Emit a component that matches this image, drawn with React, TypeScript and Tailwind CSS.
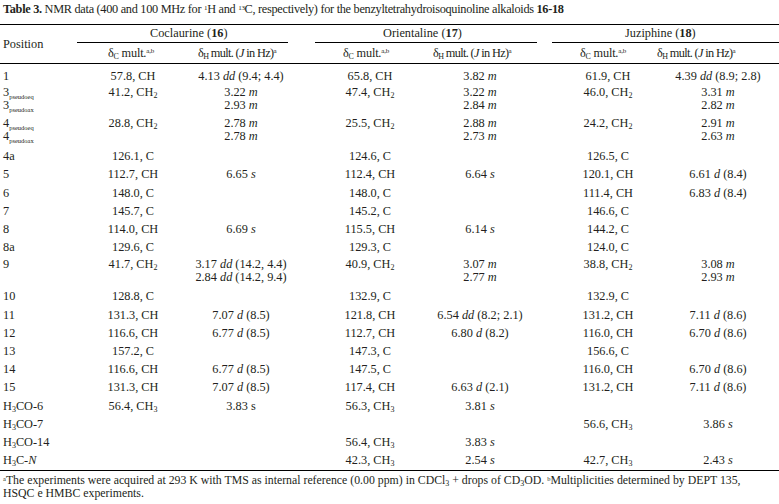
import React from "react";

type HLine = { v: string; m?: string; j?: string; plain?: boolean };
type Group = { c?: [string, string, string?]; h?: HLine[] };
type Row = { pos: React.ReactNode[]; g: [Group, Group, Group] };

const GRID = "grid grid-cols-[77px_112px_104px_22px_110px_110px_17px_112px_115px]";

const h = (v: string, m?: string, j?: string, plain?: boolean): HLine => ({ v, m, j, plain });

const Sub = ({ children }: { children: React.ReactNode }) => (
  <sub className="text-[8px]">{children}</sub>
);
const Tiny = ({ children }: { children: React.ReactNode }) => (
  <sub className="text-[6.5px] bottom-[-0.45em]">{children}</sub>
);

const rows: Row[] = [
  { pos: ["1"], g: [{ c: ["57.8", "CH"], h: [h("4.13", "dd", "(9.4; 4.4)")] }, { c: ["65.8", "CH"], h: [h("3.82", "m")] }, { c: ["61.9", "CH"], h: [h("4.39", "dd", "(8.9; 2.8)")] }] },
  {
    pos: [<>3<Tiny>pseudoeq</Tiny></>, <>3<Tiny>pseudoax</Tiny></>],
    g: [
      { c: ["41.2", "CH", "2"], h: [h("3.22", "m"), h("2.93", "m")] },
      { c: ["47.4", "CH", "2"], h: [h("3.22", "m"), h("2.84", "m")] },
      { c: ["46.0", "CH", "2"], h: [h("3.31", "m"), h("2.82", "m")] },
    ],
  },
  {
    pos: [<>4<Tiny>pseudoeq</Tiny></>, <>4<Tiny>pseudoax</Tiny></>],
    g: [
      { c: ["28.8", "CH", "2"], h: [h("2.78", "m"), h("2.78", "m")] },
      { c: ["25.5", "CH", "2"], h: [h("2.88", "m"), h("2.73", "m")] },
      { c: ["24.2", "CH", "2"], h: [h("2.91", "m"), h("2.63", "m")] },
    ],
  },
  { pos: ["4a"], g: [{ c: ["126.1", "C"] }, { c: ["124.6", "C"] }, { c: ["126.5", "C"] }] },
  { pos: ["5"], g: [{ c: ["112.7", "CH"], h: [h("6.65", "s")] }, { c: ["112.4", "CH"], h: [h("6.64", "s")] }, { c: ["120.1", "CH"], h: [h("6.61", "d", "(8.4)")] }] },
  { pos: ["6"], g: [{ c: ["148.0", "C"] }, { c: ["148.0", "C"] }, { c: ["111.4", "CH"], h: [h("6.83", "d", "(8.4)")] }] },
  { pos: ["7"], g: [{ c: ["145.7", "C"] }, { c: ["145.2", "C"] }, { c: ["146.6", "C"] }] },
  { pos: ["8"], g: [{ c: ["114.0", "CH"], h: [h("6.69", "s")] }, { c: ["115.5", "CH"], h: [h("6.14", "s")] }, { c: ["144.2", "C"] }] },
  { pos: ["8a"], g: [{ c: ["129.6", "C"] }, { c: ["129.3", "C"] }, { c: ["124.0", "C"] }] },
  {
    pos: ["9"],
    g: [
      { c: ["41.7", "CH", "2"], h: [h("3.17", "dd", "(14.2, 4.4)"), h("2.84", "dd", "(14.2, 9.4)")] },
      { c: ["40.9", "CH", "2"], h: [h("3.07", "m"), h("2.77", "m")] },
      { c: ["38.8", "CH", "2"], h: [h("3.08", "m"), h("2.93", "m")] },
    ],
  },
  { pos: ["10"], g: [{ c: ["128.8", "C"] }, { c: ["132.9", "C"] }, { c: ["132.9", "C"] }] },
  { pos: ["11"], g: [{ c: ["131.3", "CH"], h: [h("7.07", "d", "(8.5)")] }, { c: ["121.8", "CH"], h: [h("6.54", "dd", "(8.2; 2.1)")] }, { c: ["131.2", "CH"], h: [h("7.11", "d", "(8.6)")] }] },
  { pos: ["12"], g: [{ c: ["116.6", "CH"], h: [h("6.77", "d", "(8.5)")] }, { c: ["112.7", "CH"], h: [h("6.80", "d", "(8.2)")] }, { c: ["116.0", "CH"], h: [h("6.70", "d", "(8.6)")] }] },
  { pos: ["13"], g: [{ c: ["157.2", "C"] }, { c: ["147.3", "C"] }, { c: ["156.6", "C"] }] },
  { pos: ["14"], g: [{ c: ["116.6", "CH"], h: [h("6.77", "d", "(8.5)")] }, { c: ["147.5", "C"] }, { c: ["116.0", "CH"], h: [h("6.70", "d", "(8.6)")] }] },
  { pos: ["15"], g: [{ c: ["131.3", "CH"], h: [h("7.07", "d", "(8.5)")] }, { c: ["117.4", "CH"], h: [h("6.63", "d", "(2.1)")] }, { c: ["131.2", "CH"], h: [h("7.11", "d", "(8.6)")] }] },
  { pos: [<>H<Sub>3</Sub>CO-6</>], g: [{ c: ["56.4", "CH", "3"], h: [h("3.83", "s", undefined, true)] }, { c: ["56.3", "CH", "3"], h: [h("3.81", "s")] }, {}] },
  { pos: [<>H<Sub>3</Sub>CO-7</>], g: [{}, {}, { c: ["56.6", "CH", "3"], h: [h("3.86", "s")] }] },
  { pos: [<>H<Sub>3</Sub>CO-14</>], g: [{}, { c: ["56.4", "CH", "3"], h: [h("3.83", "s")] }, {}] },
  { pos: [<>H<Sub>3</Sub>C-<i>N</i></>], g: [{}, { c: ["42.3", "CH", "3"], h: [h("2.54", "s")] }, { c: ["42.7", "CH", "3"], h: [h("2.43", "s")] }] },
];

function CCell({ c }: { c?: [string, string, string?] }) {
  return (
    <div className="text-center whitespace-nowrap">
      {c ? (
        <div className="h-[13px]">
          {c[0]}, {c[1]}
          {c[2] ? <Sub>{c[2]}</Sub> : null}
        </div>
      ) : null}
    </div>
  );
}

function HCell({ lines }: { lines?: HLine[] }) {
  return (
    <div className="text-center whitespace-nowrap">
      {(lines || []).map((l, i) => (
        <div key={i} className="h-[13px]">
          {l.v}
          {l.m ? " " : ""}
          {l.m ? l.plain ? <span>{l.m}</span> : <i>{l.m}</i> : null}
          {l.j ? " " + l.j : ""}
        </div>
      ))}
    </div>
  );
}

function DataRow({ r }: { r: Row }) {
  const multi = r.pos.length > 1 || r.g.some((g) => (g.h ? g.h.length > 1 : false));
  return (
    <div className={multi ? GRID + " pt-[1px] pb-[4.2px]" : GRID + " py-[2.6px]"}>
      <div className="pl-[3px]">
        {r.pos.map((p, i) => (
          <div key={i} className="h-[13px] whitespace-nowrap">
            {p}
          </div>
        ))}
      </div>
      <CCell c={r.g[0].c} />
      <HCell lines={r.g[0].h} />
      <div />
      <CCell c={r.g[1].c} />
      <HCell lines={r.g[1].h} />
      <div />
      <CCell c={r.g[2].c} />
      <div className="pr-[7px]">
        <HCell lines={r.g[2].h} />
      </div>
    </div>
  );
}

const DC = () => (
  <span className="tracking-[-0.2px]">
    δ<Sub>C</Sub> mult.<sup className="text-[7px]">a,b</sup>
  </span>
);
const DH = () => (
  <span className="tracking-[-0.65px]">
    δ<Sub>H</Sub> mult. (<i>J</i> in Hz)<sup className="text-[7px]">a</sup>
  </span>
);

export default function App() {
  return (
    <div className="w-[779px] h-[504px] overflow-hidden bg-white text-[#231f20] text-[12.3px] leading-[13px] [font-family:Liberation_Serif,Times_New_Roman,serif]">
      <div className="h-[24px] pl-[3px] pt-[3px] whitespace-nowrap tracking-[-0.3px]">
        <b>Table 3.</b> NMR data (400 and 100 MHz for <sup className="text-[7px]">1</sup>H and{" "}
        <sup className="text-[7px]">13</sup>C, respectively) for the benzyltetrahydroisoquinoline alkaloids <b>16-18</b>
      </div>
      <div className="border-t border-black">
        <div className="flex border-b border-black whitespace-nowrap">
          <div className="w-[77px] shrink-0 flex items-center pl-[3px]">Position</div>
          <div className="flex-1 flex flex-col">
            <div className="flex h-[18px]">
              <div className="w-[211px] shrink-0 border-b border-black flex items-center justify-start pl-[73px]">
                <span>
                  Coclaurine (<b>16</b>)
                </span>
              </div>
              <div className="w-[27px] shrink-0" />
              <div className="w-[222px] shrink-0 border-b border-black flex items-center pl-[68px]">
                <span>
                  Orientaline (<b>17</b>)
                </span>
              </div>
              <div className="w-[15px] shrink-0" />
              <div className="flex-1 border-b border-black flex items-center pl-[73px]">
                <span>
                  Juziphine (<b>18</b>)
                </span>
              </div>
            </div>
            <div className="flex h-[20px] items-center">
              <div className="w-[121px] shrink-0 pl-[31px]"><DC /></div>
              <div className="w-[117px] shrink-0"><DH /></div>
              <div className="w-[118px] shrink-0 pl-[28px]"><DC /></div>
              <div className="w-[119px] shrink-0"><DH /></div>
              <div className="w-[105px] shrink-0 pl-[28px]"><DC /></div>
              <div className="flex-1"><DH /></div>
            </div>
          </div>
        </div>
        <div className="pt-[3px] border-b border-black">
          {rows.map((r, i) => (
            <DataRow key={i} r={r} />
          ))}
        </div>
      </div>
      <div className="pl-[3px] pt-[3px] text-[11.8px] leading-[13px] whitespace-nowrap">
        <sup className="text-[6.5px]">a</sup>The experiments were acquired at 293 K with TMS as internal reference (0.00 ppm) in CDCl
        <Sub>3</Sub> + drops of CD<Sub>3</Sub>OD. <sup className="text-[6.5px]">b</sup>Multiplicities determined by DEPT 135,
        <br />
        HSQC e HMBC experiments.
      </div>
    </div>
  );
}
